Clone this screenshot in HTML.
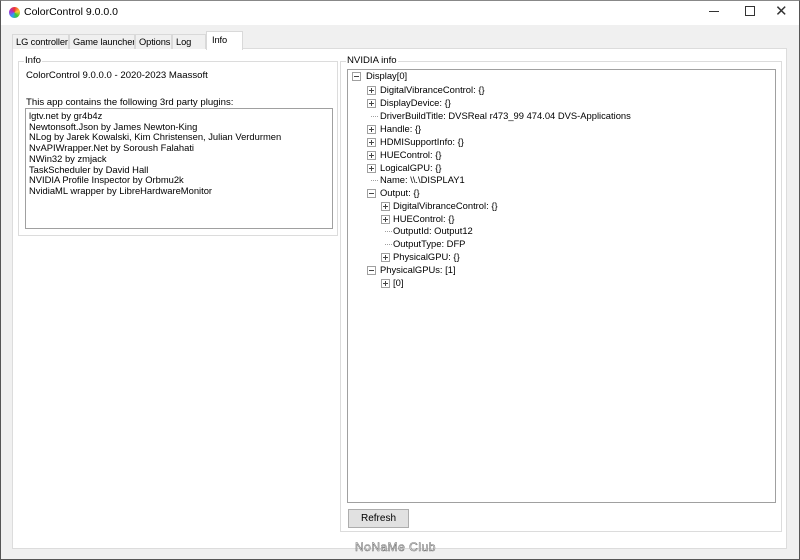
<!DOCTYPE html>
<html><head><style>
*{margin:0;padding:0;box-sizing:border-box}
body{width:800px;height:560px;background:#f0f0f0;font-family:"Liberation Sans",sans-serif;font-size:10px;color:#000;position:relative;overflow:hidden}
.a{position:absolute;white-space:nowrap}
.win{left:0;top:0;width:800px;height:560px;border:1px solid #555;border-top:1px solid #888}
.title{left:1px;top:1px;width:798px;height:24px;background:#fff}
.tab{top:34px;height:15px;border:1px solid #d9d9d9;border-bottom:none;background:#f0f0f0;padding:2px 0 0 3px;font-size:9.3px;letter-spacing:-0.1px;overflow:hidden}
.page{left:12px;top:48px;width:775px;height:501px;background:#fff;border:1px solid #dcdcdc}
.grp{border:1px solid #dcdcdc}
.gl{background:#fff;padding:0 1px;font-size:9.6px}
.box{background:#fff;border:1px solid #a0a0a0}
.r{position:absolute;white-space:nowrap;font-size:9.4px;line-height:12px}
.ex{position:absolute;width:9px;height:9px;border:1px solid #a0a0a0;background:#fff}
.ex:before{content:"";position:absolute;left:1px;top:3px;width:5px;height:1px;background:#444}
.p:after{content:"";position:absolute;left:3px;top:1px;width:1px;height:5px;background:#444}
.dl{position:absolute;height:1px;border-top:1px dotted #a0a0a0}
</style></head><body>
<div class="a win"></div>
<div class="a title"></div>
<div class="a" style="left:9px;top:7px;width:11px;height:11px;border-radius:50%;background:conic-gradient(#e33,#fc3,#3c3,#39f,#a3c,#e33)"></div>
<div class="a" style="left:24px;top:6px;font-size:10.5px">ColorControl 9.0.0.0</div>
<div class="a" style="left:709px;top:11px;width:10px;height:1px;background:#333"></div>
<div class="a" style="left:745px;top:6px;width:10px;height:10px;border:1px solid #333"></div>
<div class="a" style="left:775px;top:2px;font-size:15px;color:#333">✕</div>

<div class="a page"></div>
<div class="a tab" style="left:12px;width:57px">LG controller</div>
<div class="a tab" style="left:69px;width:66px">Game launcher</div>
<div class="a tab" style="left:135px;width:37px">Options</div>
<div class="a tab" style="left:172px;width:34px">Log</div>
<div class="a tab" style="left:206px;top:31px;height:19px;width:37px;background:#fff;padding:3px 0 0 5px">Info</div>

<div class="a grp" style="left:18px;top:61px;width:320px;height:175px"></div>
<div class="a gl" style="left:24px;top:55px">Info</div>
<div class="a" style="left:26px;top:70px;font-size:9.6px">ColorControl 9.0.0.0 - 2020-2023 Maassoft</div>
<div class="a" style="left:26px;top:97px;font-size:9.6px">This app contains the following 3rd party plugins:</div>
<div class="a box" style="left:25px;top:108px;width:308px;height:121px;padding:2px 0 0 3px;line-height:10.7px;font-size:9.4px">
lgtv.net by gr4b4z<br>Newtonsoft.Json by James Newton-King<br>NLog by Jarek Kowalski, Kim Christensen, Julian Verdurmen<br>NvAPIWrapper.Net by Soroush Falahati<br>NWin32 by zmjack<br>TaskScheduler by David Hall<br>NVIDIA Profile Inspector by Orbmu2k<br>NvidiaML wrapper by LibreHardwareMonitor</div>

<div class="a grp" style="left:340px;top:61px;width:442px;height:471px"></div>
<div class="a gl" style="left:346px;top:55px">NVIDIA info</div>
<div class="a box" style="left:347px;top:69px;width:429px;height:434px"></div>
<div class="a" style="left:348px;top:509px;width:61px;height:19px;background:#e1e1e1;border:1px solid #adadad;text-align:center;line-height:17px">Refresh</div>

<div class="a" style="left:0;top:0">
<div class="ex" style="left:352px;top:72px"></div><div class="r" style="left:366px;top:70px">Display[0]</div>
<div class="ex p" style="left:367px;top:86px"></div><div class="r" style="left:380px;top:84px">DigitalVibranceControl: {}</div>
<div class="ex p" style="left:367px;top:99px"></div><div class="r" style="left:380px;top:97px">DisplayDevice: {}</div>
<div class="dl" style="left:371px;top:116px;width:7px"></div><div class="r" style="left:380px;top:110px">DriverBuildTitle: DVSReal r473_99 474.04 DVS-Applications</div>
<div class="ex p" style="left:367px;top:125px"></div><div class="r" style="left:380px;top:123px">Handle: {}</div>
<div class="ex p" style="left:367px;top:138px"></div><div class="r" style="left:380px;top:136px">HDMISupportInfo: {}</div>
<div class="ex p" style="left:367px;top:151px"></div><div class="r" style="left:380px;top:149px">HUEControl: {}</div>
<div class="ex p" style="left:367px;top:164px"></div><div class="r" style="left:380px;top:162px">LogicalGPU: {}</div>
<div class="dl" style="left:371px;top:180px;width:7px"></div><div class="r" style="left:380px;top:174px">Name: \\.\DISPLAY1</div>
<div class="ex" style="left:367px;top:189px"></div><div class="r" style="left:380px;top:187px">Output: {}</div>
<div class="ex p" style="left:381px;top:202px"></div><div class="r" style="left:393px;top:200px">DigitalVibranceControl: {}</div>
<div class="ex p" style="left:381px;top:215px"></div><div class="r" style="left:393px;top:213px">HUEControl: {}</div>
<div class="dl" style="left:385px;top:231px;width:7px"></div><div class="r" style="left:393px;top:225px">OutputId: Output12</div>
<div class="dl" style="left:385px;top:244px;width:7px"></div><div class="r" style="left:393px;top:238px">OutputType: DFP</div>
<div class="ex p" style="left:381px;top:253px"></div><div class="r" style="left:393px;top:251px">PhysicalGPU: {}</div>
<div class="ex" style="left:367px;top:266px"></div><div class="r" style="left:380px;top:264px">PhysicalGPUs: [1]</div>
<div class="ex p" style="left:381px;top:279px"></div><div class="r" style="left:393px;top:277px">[0]</div>
</div>

<div class="a" style="left:355px;top:540px;font-size:12px;color:#fff;-webkit-text-stroke:0.6px #777;letter-spacing:0.5px">NoNaMe Club</div>
</body></html>
